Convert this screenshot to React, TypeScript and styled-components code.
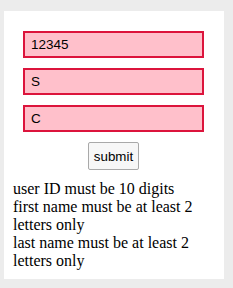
import styled, { createGlobalStyle } from "styled-components"

const GlobalStyle = createGlobalStyle`
  body {
    margin: 0;
    background-color: #ececec;
  }
`

const App = () => {
  return (
    <Page>
      <GlobalStyle />
      <Card>
        <Form onSubmit={(e) => e.preventDefault()}>
          <Field defaultValue="12345" />
          <Field defaultValue="S" />
          <Field defaultValue="C" />
          <SubmitButton type="submit">submit</SubmitButton>
        </Form>
        <Errors>
          <p>user ID must be 10 digits</p>
          <p>first name must be at least 2 letters only</p>
          <p>last name must be at least 2 letters only</p>
        </Errors>
      </Card>
    </Page>
  )
}

export default App

const Page = styled.div`
  padding: 11px 9px 9px 4px;
`

const Card = styled.div`
  width: 220px;
  box-sizing: border-box;
  background-color: #fff;
  padding: 20px 10px 9px 9px;
`

const Form = styled.form`
  display: flex;
  flex-direction: column;
  align-items: center;
  gap: 10px;
`

const Field = styled.input`
  width: 181px;
  height: 27px;
  box-sizing: border-box;
  border: 2px solid #dc143c;
  background-color: #ffc0cb;
  padding: 0 6px;
  font: 13.5px "Liberation Sans", Arial, sans-serif;
  color: #000;
  outline: none;
`

const SubmitButton = styled.button`
  height: 28px;
  padding: 0 5px;
  box-sizing: border-box;
  border: 1px solid #a9a9a9;
  border-radius: 2px;
  background-color: #f7f7f7;
  font: 13.33px "Liberation Sans", Arial, sans-serif;
  color: #000;
`

const Errors = styled.div`
  margin-top: 10px;
  font: 16px "Liberation Serif", "Times New Roman", serif;
  color: #000;

  p {
    margin: 0;
  }
`
